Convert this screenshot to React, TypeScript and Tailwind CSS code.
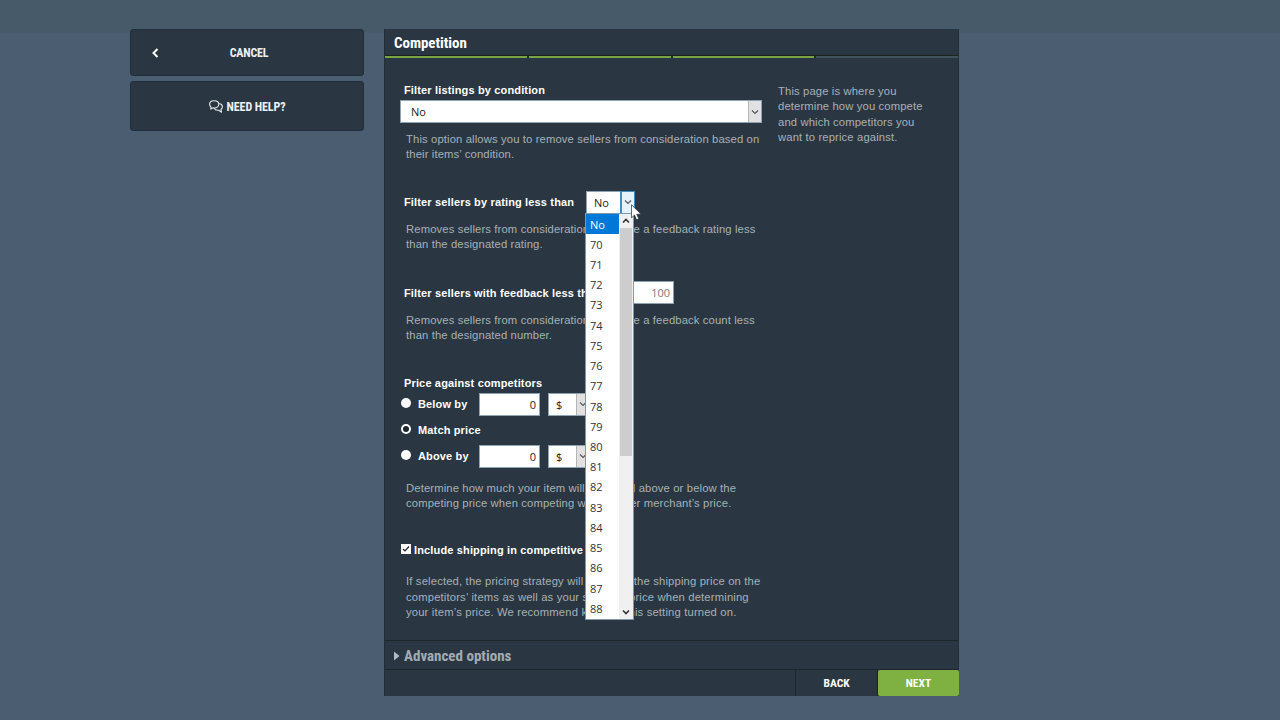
import { ReactNode } from 'react';
import clsx from 'clsx';

const ratings = ['No', ...Array.from({ length: 19 }, (_, i) => String(70 + i))];

const uiFont = "font-['Open_Sans','Noto_Sans',sans-serif]";
const narrowFont = "font-['Liberation_Sans_Narrow','Roboto_Condensed',sans-serif]";

function Chevron({ up = false, bold = false }: { up?: boolean; bold?: boolean }) {
  return (
    <svg width="8" height="6" viewBox="0 0 8 6" fill="none" stroke={bold ? '#333' : '#555'} strokeWidth={bold ? 1.6 : 1.1}>
      <path d={up ? 'M1 4.5 4 1.5 7 4.5' : 'M1 1.5 4 4.5 7 1.5'} />
    </svg>
  );
}

function Label({ children }: { children: ReactNode }) {
  return <div className="text-[11px] font-bold leading-[14px] tracking-[0.15px] whitespace-nowrap text-white">{children}</div>;
}

function Help({ lines, className }: { lines: string[]; className?: string }) {
  return (
    <div className={clsx('text-[11.25px] leading-[15.3px] tracking-[0.13px] whitespace-nowrap text-[#a8b0b6]', className)}>
      {lines.map((line) => (
        <p key={line}>{line}</p>
      ))}
    </div>
  );
}

function Select({ value, active = false, className }: { value: string; active?: boolean; className?: string }) {
  return (
    <div className={clsx('flex h-[23px] border border-[#8ea3b3] bg-white text-[#222]', uiFont, className)}>
      <span className="flex-1 text-[11px] leading-[21px]">{value}</span>
      <span
        className={clsx(
          'flex w-[13px] items-center justify-center border-l',
          active ? 'border-[#3c8ec4] bg-[#e5f1fb] ring-1 ring-[#3c8ec4]' : 'border-[#b5b5b5] bg-[#e1e1e1]'
        )}
      >
        <Chevron />
      </span>
    </div>
  );
}

function NumberBox({ value, className }: { value: string; className?: string }) {
  return (
    <div className={clsx('h-[23px] border border-[#8ea3b3] bg-white pr-[3px] text-right text-[11px] leading-[21px]', uiFont, className)}>
      {value}
    </div>
  );
}

function Radio({ checked = false }: { checked?: boolean }) {
  return (
    <span className="mb-[3px] ml-px flex size-[10px] items-center justify-center rounded-full bg-white">
      {checked && <span className="size-[6px] rounded-full bg-[#1c2730]" />}
    </span>
  );
}

function PriceRow({ label, hasInput = true, checked = false }: { label: string; hasInput?: boolean; checked?: boolean }) {
  return (
    <div className="flex h-[23px] items-center">
      <Radio checked={checked} />
      <div className="ml-[7px] w-[61px]">
        <Label>{label}</Label>
      </div>
      {hasInput && (
        <>
          <NumberBox value="0" className="w-[61px] text-[#222]" />
          <Select value="$" className="ml-2 w-[42px] pl-[7px]" />
        </>
      )}
    </div>
  );
}

function RatingMenu() {
  return (
    <div className="absolute top-[22px] -left-px z-10 flex h-[407px] w-[49px] border border-[#7f99ab] bg-white">
      <ul className={clsx('flex-1 text-[11px] text-[#333]', uiFont)}>
        {ratings.map((rating, i) => (
          <li
            key={rating}
            className={clsx('h-[20.23px] pl-1 leading-[21px]', i === 0 && 'bg-[#0078d7] text-white')}
          >
            {rating}
          </li>
        ))}
      </ul>
      <div className="flex w-[14px] flex-col items-center bg-[#f0f0f0]">
        <span className="flex h-[14px] items-center"><Chevron up bold /></span>
        <span className="h-[228px] w-[12px] bg-[#cdcdcd]" />
        <span className="mt-auto flex h-[14px] items-center"><Chevron bold /></span>
      </div>
    </div>
  );
}

function Pointer() {
  return (
    <svg className="absolute top-[13px] left-[45px] z-20" width="11" height="17" viewBox="0 0 11 17">
      <path d="M.5.8v13l3-2.8 2 4.8 2.3-1-2-4.6h4.3z" fill="#fff" stroke="#222b33" strokeWidth=".7" />
    </svg>
  );
}

export default function App() {
  return (
    <div className="h-[720px] w-[1280px] overflow-hidden bg-[#4a5d71] bg-[linear-gradient(#465a6a_32px,transparent_33px)] font-['Liberation_Sans',Arial,sans-serif]">
      <div className="flex gap-[20px] pt-[29px] pl-[130px]">
        <aside className={clsx('flex w-[234px] flex-col gap-[5px] text-[12px] font-bold text-[#edf1f4]', narrowFont)}>
          <button className="flex h-[47px] items-center rounded-[3px] border border-[#202f3a] bg-[#2a3742]">
            <svg className="ml-[20px]" width="8" height="10" viewBox="0 0 8 10" fill="none" stroke="#fff" strokeWidth="2">
              <path d="M6.5 1 2.5 5l4 4" />
            </svg>
            <span className="flex-1 pr-[24px] text-center tracking-[-0.2px]">CANCEL</span>
          </button>
          <button className="flex h-[50px] items-center justify-center gap-1 rounded-[3px] border border-[#202f3a] bg-[#2a3742] pt-px tracking-[-0.1px]">
            <svg width="14" height="13" viewBox="0 0 14 13" fill="none" stroke="#e4e9ed" strokeWidth="1.1" strokeLinejoin="round">
              <path d="M5.200.7C2.500.7.600 2.300.600 4.300c0 1.200.6 2.200 1.500 2.900L1.700 9l2.200-1.100c.4.1.9.1 1.300.1C7.900 8 9.800 6.300 9.800 4.300S7.900.7 5.200.7z" />
              <path d="M10.300 3.500c1.900.4 3.100 1.600 3.100 3.200 0 1.100-.5 2-1.400 2.600l.5 2.900-2.800-2c-2 .2-4-.6-4.700-2" />
            </svg>
            NEED HELP?
          </button>
        </aside>

        <main className="flex h-[667px] w-[575px] flex-col border-x border-[#212e38] bg-[#2a3742]">
          <h1 className={clsx('h-[26px] pl-[9px] text-[15px] leading-[28px] font-bold tracking-[-0.05px] text-white', narrowFont)}>
            Competition
          </h1>
          <div className="flex h-[3px] gap-[2px] border-t border-[#19221f] bg-[#202c34]">
            <span className="flex-1 bg-[#7aa545]" />
            <span className="flex-1 bg-[#7aa545]" />
            <span className="flex-1 bg-[#7aa545]" />
            <span className="flex-1 bg-[#42525d]" />
          </div>

          <div className="flex h-[582px] pl-[15px]">
            <section className="w-[362px]">
              <div className="mt-[25px] ml-[4px]">
                <Label>Filter listings by condition</Label>
              </div>
              <Select value="No" className="mt-[3px] pl-[10px]" />
              <Help
                className="mt-[9px] ml-[6px]"
                lines={['This option allows you to remove sellers from consideration based on', 'their items’ condition.']}
              />

              <div className="mt-[28px] ml-[4px] flex items-center">
                <div className="w-[182px]">
                  <Label>Filter sellers by rating less than</Label>
                </div>
                <div className="relative">
                  <Select value="No" active className="w-[49px] pl-[7px]" />
                  <RatingMenu />
                  <Pointer />
                </div>
              </div>
              <Help
                className="mt-[8px] ml-[6px]"
                lines={['Removes sellers from consideration that have a feedback rating less', 'than the designated rating.']}
              />

              <div className="mt-[29px] ml-[4px] flex items-center">
                <div className="w-[209px]">
                  <Label>Filter sellers with feedback less than</Label>
                </div>
                <NumberBox value="100" className="w-[61px] text-[#777]" />
              </div>
              <Help
                className="mt-[9px] ml-[6px]"
                lines={['Removes sellers from consideration that have a feedback count less', 'than the designated number.']}
              />

              <div className="mt-[32px] ml-[4px]">
                <Label>Price against competitors</Label>
              </div>
              <div className="mt-[3px] flex flex-col gap-[3px]">
                <PriceRow label="Below by" />
                <PriceRow label="Match price" hasInput={false} checked />
                <PriceRow label="Above by" />
              </div>
              <Help
                className="mt-[13px] ml-[6px]"
                lines={['Determine how much your item will be priced above or below the', 'competing price when competing with another merchant’s price.']}
              />

              <div className="mt-[32px] flex items-center">
                <span className="mb-[2px] ml-px flex size-[10px] items-center justify-center bg-white">
                  <svg width="8" height="8" viewBox="0 0 8 8" fill="none" stroke="#222" strokeWidth="1.2">
                    <path d="M1 4l2 2 4-4.500" />
                  </svg>
                </span>
                <div className="ml-[3px]">
                  <Label>Include shipping in competitive pricing</Label>
                </div>
              </div>
              <Help
                className="mt-[17px] ml-[6px] tracking-[0.16px]"
                lines={[
                  'If selected, the pricing strategy will consider the shipping price on the',
                  'competitors’ items as well as your shipping price when determining',
                  'your item’s price. We recommend keeping this setting turned on.',
                ]}
              />
            </section>

            <Help
              className="mt-[26px] ml-[16px]"
              lines={['This page is where you', 'determine how you compete', 'and which competitors you', 'want to reprice against.']}
            />
          </div>

          <div className={clsx('flex h-[30px] items-center gap-[4px] border-y border-[#1c2529] pt-[2px] pl-[9px] text-[15px] font-bold text-[#a3abb2]', narrowFont)}>
            <svg width="6" height="10" viewBox="0 0 6 10" fill="#b4bbc0">
              <path d="M0 .5 5.500 5 0 9.500z" />
            </svg>
            Advanced options
          </div>
          <div className={clsx('-mr-px flex flex-1 justify-end text-[11.5px] font-bold text-white', narrowFont)}>
            <button className="w-[83px] border-x border-[#1c2529] pt-px">BACK</button>
            <button className="w-[81px] rounded-[2px] bg-[#7fb142] pt-px">NEXT</button>
          </div>
        </main>
      </div>
    </div>
  );
}
